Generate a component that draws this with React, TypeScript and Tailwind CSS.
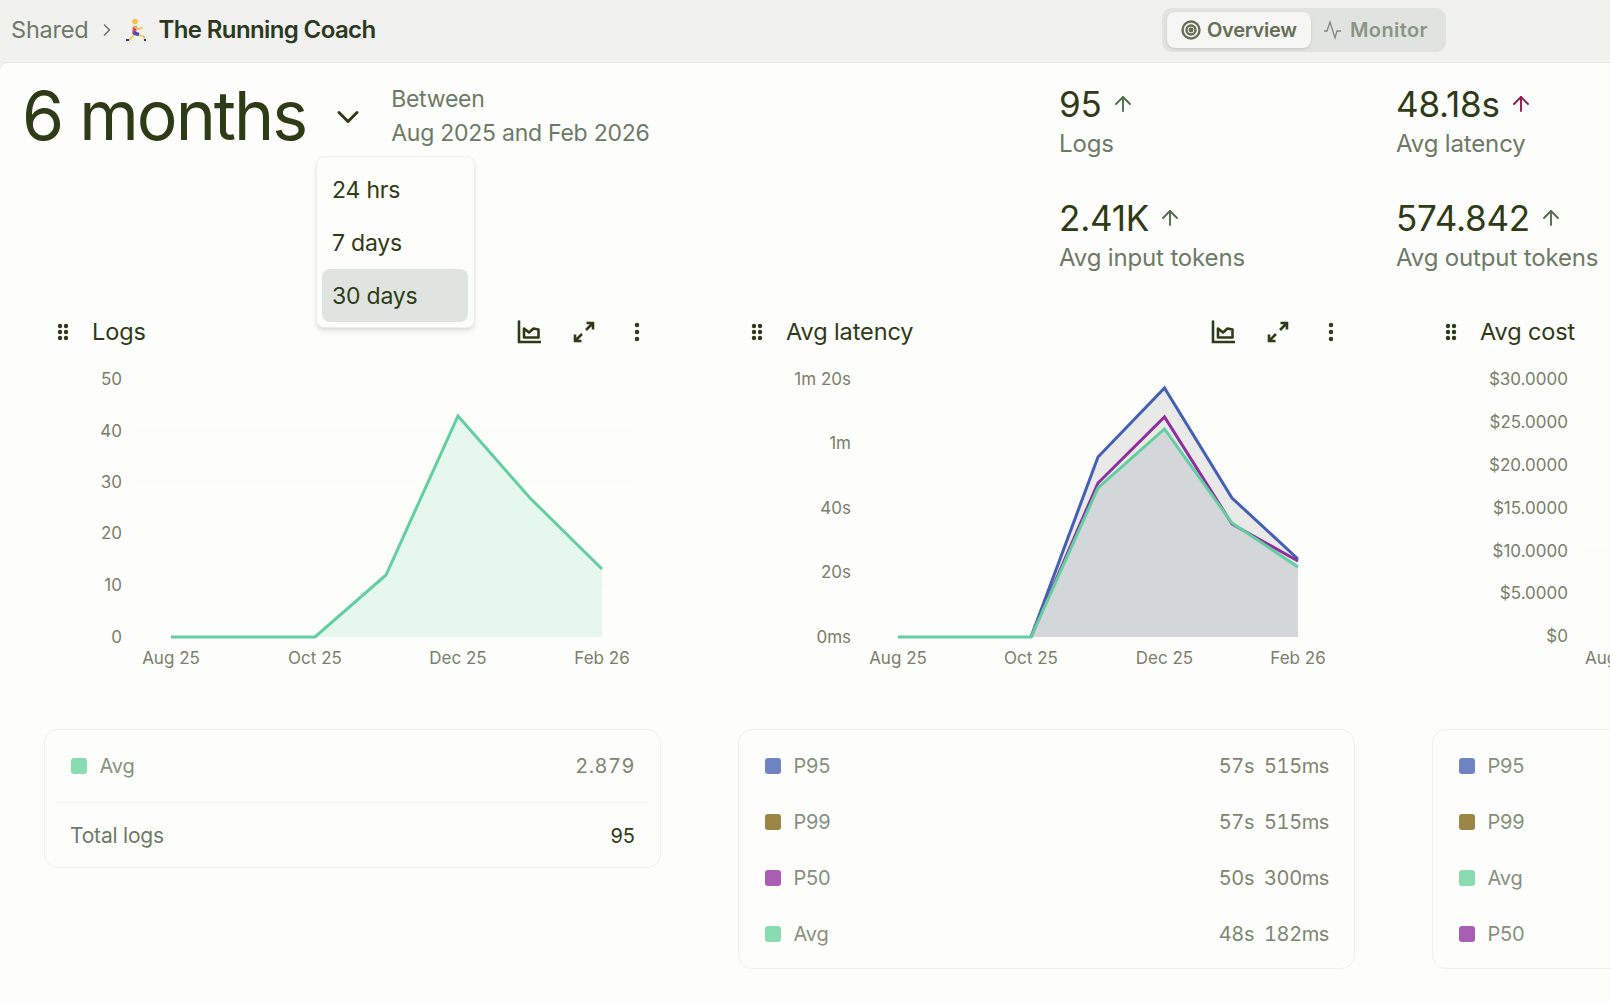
import React from "react";
import { ArrowUp, ChevronDown, ChevronRight, MoreVertical } from "lucide-react";

type LegendRow = { label: string; color: string; value?: string };

const GripIcon = () => (
  <svg width="12" height="18" viewBox="0 0 12 18" className="fill-[#2f3a16]">
    <circle cx="3" cy="3" r="2.2" />
    <circle cx="9" cy="3" r="2.2" />
    <circle cx="3" cy="9" r="2.2" />
    <circle cx="9" cy="9" r="2.2" />
    <circle cx="3" cy="15" r="2.2" />
    <circle cx="9" cy="15" r="2.2" />
  </svg>
);

const AreaChartIcon = () => (
  <svg width="24" height="24" viewBox="0 0 24 24" fill="none" stroke="#2f3a16" strokeWidth="2.6">
    <path d="M2 1.5v20.5h21.5" strokeLinecap="round" />
    <path d="M7 17.5V8.5l5 4 4.5-4 5 1v8z" strokeLinejoin="round" />
  </svg>
);

const ExpandIcon = () => (
  <svg width="24" height="24" viewBox="0 0 24 24" fill="none" stroke="#2f3a16" strokeWidth="2.6">
    <path d="M14 10l7-7M14.5 3H21v6.5M10 14l-7 7M3 14.5V21h6.5" />
  </svg>
);

const RunnerIcon = () => (
  <svg width="22" height="24" viewBox="0 0 22 24" fill="none">
    <path d="M9 8l-1 8" stroke="#d6457c" strokeWidth="4" />
    <circle cx="9" cy="3.5" r="2.8" fill="#f5c33b" />
    <path d="M7 8l5.5 3 4-1.5" stroke="#f5c33b" strokeWidth="1.6" />
    <path d="M7.5 15l5.5 1.5" stroke="#4a4fa8" strokeWidth="3.5" />
    <path d="M7.5 17L4 21.5H1" stroke="#f5c33b" strokeWidth="1.6" />
    <path d="M13 17l5 1.5.5 3" stroke="#f5c33b" strokeWidth="1.6" />
    <path d="M0 22h3M18 22h2" stroke="#28407a" strokeWidth="2" />
  </svg>
);

const Stat = ({ value, label, up = "#4f6f49" }: { value: string; label: string; up?: string }) => (
  <div className="h-[114px]">
    <div className="flex items-center gap-[9px] h-[44px]">
      <span className="text-[35px] leading-none text-[#2f3a16] tracking-[-0.2px]">{value}</span>
      <ArrowUp size={24} color={up} strokeWidth={1.9} />
    </div>
    <div className="mt-[3px] text-[24px] leading-[30px] text-[#6c7a66] tracking-[-0.15px]">{label}</div>
  </div>
);

const ChartHeader = ({ title }: { title: string }) => (
  <div className="flex items-center h-[36px] pl-[12px] pr-[11px]">
    <GripIcon />
    <span className="ml-[23px] text-[23.5px] text-[#2f3a16] tracking-[-0.1px]">{title}</span>
    <div className="ml-auto flex items-center gap-[29px]">
      <div className="flex items-center gap-[31px]">
        <AreaChartIcon />
        <ExpandIcon />
      </div>
      <MoreVertical size={24} color="#2f3a16" strokeWidth={2.6} />
    </div>
  </div>
);

const Legend = ({ rows, total }: { rows: LegendRow[]; total?: string }) => (
  <div className="border border-[#f0f0ee] rounded-[14px] pt-2 pb-[6px] mt-[9px] -mx-px">
    {rows.map((r) => (
      <div key={r.label} className="flex items-center h-14 pl-[25.5px] pr-[25px]">
        <span className="w-4 h-4 rounded-[3px] mr-[13px]" style={{ backgroundColor: r.color }} />
        <span className="text-[20px] text-[#87917f] tracking-[-0.2px]">{r.label}</span>
        <span
          className={
            total
              ? "ml-auto text-[20px] text-[#7f8570] tabular-nums tracking-[0.5px] whitespace-pre"
              : "ml-auto text-[20px] text-[#7f8570] tabular-nums tracking-[-0.4px] whitespace-pre"
          }
        >
          {r.value}
        </span>
      </div>
    ))}
    {total && (
      <>
        <div className="h-px bg-[#f3f3f1] mx-3 mt-[8px]" />
        <div className="flex items-center justify-between h-14 pl-[25px] pr-[25px] mt-[5px] -mb-[3px]">
          <span className="text-[21px] text-[#6c7a66] tracking-[-0.2px]">Total logs</span>
          <span className="text-[20px] text-[#2f3a16]">{total}</span>
        </div>
      </>
    )}
  </div>
);

const pts = (a: number[][]) => a.map((p) => p.join(",")).join(" ");

const Tick = ({ x, y, children, anchor = "end" }: { x: number; y: number; children: string; anchor?: "end" | "middle" | "start" }) => (
  <text x={x} y={y} textAnchor={anchor} dominantBaseline="central" fontSize="17" fill="#7a7f69">
    {children}
  </text>
);

const LogsChart = () => {
  const line = [[171, 637], [315, 637], [386, 575], [458, 416], [530, 498], [602, 569]];
  return (
    <svg width="615" height="370" viewBox="45 350 615 370" className="block overflow-visible">
      {[431, 482, 533, 585].map((y) => (
        <line key={y} x1="130" x2="632" y1={y} y2={y} stroke="#fafaf7" />
      ))}
      <polygon points={pts([[315, 637], ...line.slice(2), [602, 637]])} fill="#e6f8ee" />
      <polyline points={pts(line)} fill="none" stroke="#62cfa0" strokeWidth="3" />
      {[["50", 379], ["40", 431], ["30", 482], ["20", 533], ["10", 585], ["0", 637]].map(([t, y]) => (
        <Tick key={t} x={122} y={y as number}>{t as string}</Tick>
      ))}
      {[["Aug 25", 171], ["Oct 25", 315], ["Dec 25", 458], ["Feb 26", 602]].map(([t, x]) => (
        <Tick key={t} x={x as number} y={658} anchor="middle">{t as string}</Tick>
      ))}
    </svg>
  );
};

const LatencyChart = () => {
  const xs = [1031, 1098, 1164.5, 1232, 1298];
  const blue = [637, 457, 388, 498, 559];
  const purple = [637, 483, 417, 524, 561];
  const green = [637, 488, 429, 523, 567];
  const zip = (ys: number[]) => xs.map((x, i) => [x, ys[i]]);
  return (
    <svg width="615" height="370" viewBox="739 350 615 370" className="block overflow-visible">
      <polygon points={pts([...zip(blue), [1298, 637]])} fill="#e9e9e8" />
      <polygon points={pts([...zip(green), [1298, 637]])} fill="#d3d7da" />
      <polyline points={pts(zip(blue))} fill="none" stroke="#4460b5" strokeWidth="3" />
      <polyline points={pts(zip(purple))} fill="none" stroke="#8e2f9f" strokeWidth="3" />
      <polyline points={pts([[898, 637], ...zip(green)])} fill="none" stroke="#62cfa0" strokeWidth="3" />
      {[["1m 20s", 379], ["1m", 443], ["40s", 508], ["20s", 572], ["0ms", 637]].map(([t, y]) => (
        <Tick key={t} x={851} y={y as number}>{t as string}</Tick>
      ))}
      {[["Aug 25", 898], ["Oct 25", 1031], ["Dec 25", 1164.5], ["Feb 26", 1298]].map(([t, x]) => (
        <Tick key={t} x={x as number} y={658} anchor="middle">{t as string}</Tick>
      ))}
    </svg>
  );
};

const CostChart = () => (
  <svg width="615" height="370" viewBox="1432 350 615 370" className="block overflow-visible">
    {[422, 465, 508, 551, 593].map((y) => (
      <line key={y} x1="1580" x2="2030" y1={y} y2={y} stroke="#fafaf7" />
    ))}
    {[["$30.0000", 379], ["$25.0000", 422], ["$20.0000", 465], ["$15.0000", 508], ["$10.0000", 551], ["$5.0000", 593], ["$0", 636]].map(([t, y]) => (
      <Tick key={t} x={1567} y={y as number}>{t as string}</Tick>
    ))}
    <Tick x={1584} y={658} anchor="start">Aug 25</Tick>
  </svg>
);

const App = () => {
  return (
    <div className="w-[1610px] h-[1002px] overflow-hidden bg-[#f1f1f0] font-['Inter',sans-serif]">
      {/* TOP BAR */}
      <div className="h-[62px] flex items-center pl-[11px] pr-[164px] pb-[2px]">
        <span className="text-[23.5px] text-[#6c7a66] tracking-[-0.2px]">Shared</span>
        <ChevronRight size={20} color="#6c7a66" className="ml-[8px] mr-[9px]" />
        <RunnerIcon />
        <span className="ml-[11px] text-[24px] font-semibold text-[#2b3a1f] tracking-[-0.62px]">The Running Coach</span>
        <div className="ml-auto flex items-center h-[44px] w-[284px] p-[5px] rounded-[10px] bg-[#e0e3df]">
          <div className="flex items-center h-[36px] w-[144px] pl-[14px] gap-[6px] rounded-lg bg-[#f6f6f5] shadow-sm">
            <svg width="20" height="20" viewBox="0 0 20 20" fill="none" stroke="#666f55" strokeWidth="2.4">
              <circle cx="10" cy="10" r="8.5" />
              <circle cx="10" cy="10" r="4.5" />
              <circle cx="10" cy="10" r="1.2" />
            </svg>
            <span className="text-[20px] font-semibold text-[#666f55] tracking-[-0.3px]">Overview</span>
          </div>
          <div className="flex items-center pl-[12px] gap-[7px]">
            <svg width="20" height="20" viewBox="0 0 20 20" fill="none" stroke="#7d8a7a" strokeWidth="1.3">
              <path d="M1 11h3l3-9 5 16 2-7h4" />
            </svg>
            <span className="text-[20px] font-semibold text-[#8a9587] tracking-[0.4px]">Monitor</span>
          </div>
        </div>
      </div>

      <main className="relative h-[940px] bg-[#fdfdfb] border-t border-[#e6e6e4] rounded-tl-lg">
        {/* SUMMARY */}
        <div className="flex h-[251px]">
          <div className="flex pl-[22px] pt-[11px]">
            <span className="text-[68px] leading-[82px] text-[#2f3a16] tracking-[-2px]">6 months</span>
            <ChevronDown size={36} color="#2f3a16" strokeWidth={2} className="ml-[24px] mt-[25px]" />
            <div className="ml-[25px] mt-[8px] text-[23px] leading-[34px] text-[#6c7a66] tracking-[-0.25px]">
              <div>Between</div>
              <div>Aug 2025 and Feb 2026</div>
            </div>
          </div>
          <div className="ml-auto w-[551px] pt-[19px] grid grid-cols-[337px_1fr] content-start">
            <Stat value="95" label="Logs" />
            <Stat value="48.18s" label="Avg latency" up="#8f1d4a" />
            <Stat value="2.41K" label="Avg input tokens" />
            <Stat value="574.842" label="Avg output tokens" />
          </div>
        </div>

        {/* CHARTS */}
        <div className="flex gap-[79px] pl-[45px]">
          <div className="w-[615px] shrink-0">
            <ChartHeader title="Logs" />
            <LogsChart />
            <Legend rows={[{ label: "Avg", color: "#88dcb0", value: "2.879" }]} total="95" />
          </div>
          <div className="w-[615px] shrink-0">
            <ChartHeader title="Avg latency" />
            <LatencyChart />
            <Legend
              rows={[
                { label: "P95", color: "#6e84c4", value: "57s  515ms" },
                { label: "P99", color: "#9a8645", value: "57s  515ms" },
                { label: "P50", color: "#a95db3", value: "50s  300ms" },
                { label: "Avg", color: "#88dcb0", value: "48s  182ms" },
              ]}
            />
          </div>
          <div className="w-[615px] shrink-0">
            <ChartHeader title="Avg cost" />
            <CostChart />
            <Legend
              rows={[
                { label: "P95", color: "#6e84c4" },
                { label: "P99", color: "#9a8645" },
                { label: "Avg", color: "#88dcb0" },
                { label: "P50", color: "#a95db3" },
              ]}
            />
          </div>
        </div>

        {/* RANGE DROPDOWN */}
        <div className="absolute left-[316px] top-[93px] w-[159px] h-[172px] py-[6px] pl-[5px] pr-[6px] bg-[#fdfdfb] border border-[#eeeeec] rounded-lg shadow-md text-[23px] text-[#2f3a16] tracking-[-0.2px]">
          <div className="flex items-center h-[53px] pl-[10px] pt-[2px]">24 hrs</div>
          <div className="flex items-center h-[53px] pl-[10px] pt-[2px]">7 days</div>
          <div className="flex items-center h-[53px] pl-[10px] pt-[2px] rounded-lg bg-[#e0e4e0]">30 days</div>
        </div>
      </main>
    </div>
  );
};

export default App;
